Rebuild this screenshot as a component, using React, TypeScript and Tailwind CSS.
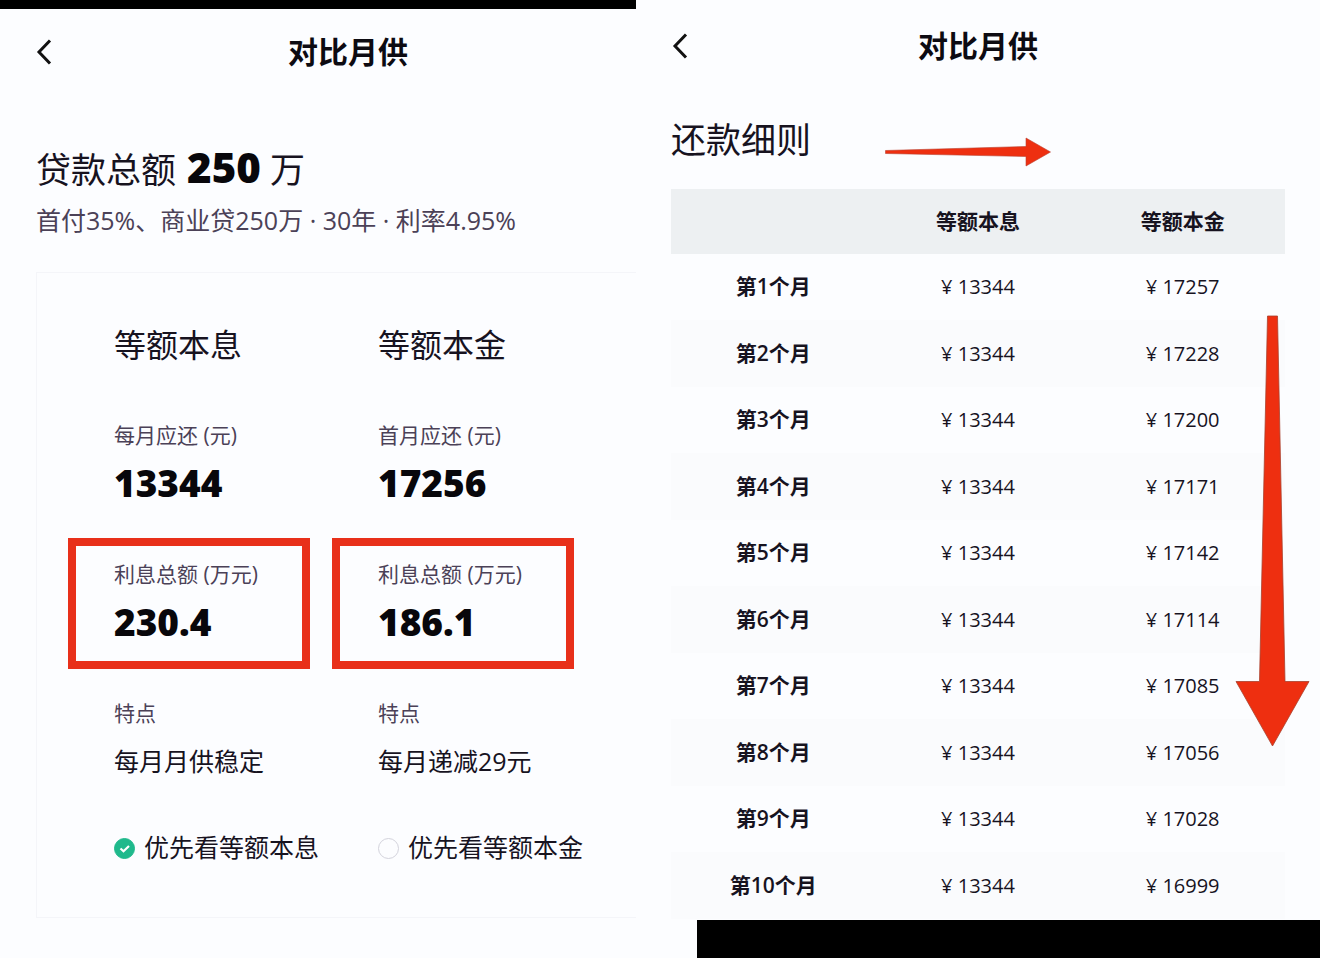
import { useState } from "react";

type Plan = {
  id: string;
  name: string;
  firstLabel: string;
  first: string;
  interest: string;
  feature: string;
};

const PLANS: Plan[] = [
  { id: "interest", name: "等额本息", firstLabel: "每月应还 (元)", first: "13344", interest: "230.4", feature: "每月月供稳定" },
  { id: "principal", name: "等额本金", firstLabel: "首月应还 (元)", first: "17256", interest: "186.1", feature: "每月递减29元" },
];

const MONTHLY = 13344;
const DECREASING = [17257, 17228, 17200, 17171, 17142, 17114, 17085, 17056, 17028, 16999];

function Header({ className }: { className: string }) {
  return (
    <header className={`flex items-center ${className}`}>
      <button type="button" aria-label="返回" className="w-6">
        <svg width="16" height="28" viewBox="0 0 16 28" fill="none" stroke="#111" strokeWidth="3">
          <path d="M14 2.5 L3 14 L14 25.5" />
        </svg>
      </button>
      <h1 className="flex-1 text-center text-[30px] leading-10 font-bold text-[#0d0b12]">对比月供</h1>
    </header>
  );
}

function Figure({ label, children }: { label: string; children: React.ReactNode }) {
  return (
    <div className="relative">
      <p className="text-[21px] leading-8 text-[#4b4157]">{label}</p>
      {children}
    </div>
  );
}

function PlanColumn({ plan, checked, onSelect }: { plan: Plan; checked: boolean; onSelect: () => void }) {
  return (
    <div>
      <h3 className="mb-[50px] text-[32px] leading-[48px] text-[#17131f]">{plan.name}</h3>
      <div className="flex flex-col gap-[43px]">
        <Figure label={plan.firstLabel}>
          <p className="text-[37px] leading-[64px] font-extrabold text-[#08070b]">{plan.first}</p>
        </Figure>
        <Figure label="利息总额 (万元)">
          <p className="text-[37px] leading-[64px] font-extrabold text-[#08070b]">{plan.interest}</p>
          {/* red marker around the total interest */}
          <span className="absolute -top-5 -left-[46px] h-[131px] w-[242px] border-8 border-[#e8301a]" />
        </Figure>
        <Figure label="特点">
          <p className="text-[25px] leading-[64px] text-[#17131f]">{plan.feature}</p>
        </Figure>
        <label className="flex h-6 items-center gap-[9px] text-[25px] whitespace-nowrap text-[#17131f]">
          <span className="relative flex">
            <input
              type="radio"
              name="plan"
              checked={checked}
              onChange={onSelect}
              className="size-[21px] appearance-none rounded-full border border-[#d3d3dc] checked:border-[#1fb98c] checked:bg-[#1fb98c]"
            />
            {checked && (
              <svg className="pointer-events-none absolute inset-0" width="21" height="21" viewBox="0 0 21 21" fill="none" stroke="#fff" strokeWidth="2.2">
                <path d="M6.5 10.5 L9.5 13.2 L15 8" />
              </svg>
            )}
          </span>
          优先看{plan.name}
        </label>
      </div>
    </div>
  );
}

function Summary() {
  const [selected, setSelected] = useState("interest");

  return (
    <section className="flex flex-col">
      <div className="h-[9px] bg-black" />
      <Header className="h-[86px] pl-9" />
      <div className="pt-[46px] pl-9">
        <h2 className="text-[35px] leading-[52px] text-[#17131f]">
          贷款总额 <b className="ml-[2px] text-[42px] leading-[52px] font-extrabold text-[#08070b]">250</b> 万
        </h2>
        <p className="mt-1 text-[25px] leading-10 whitespace-nowrap text-[#4b4157]">
          首付35%、商业贷250万 · 30年 · 利率4.95%
        </p>
        <div className="mt-8 grid grid-cols-2 gap-x-[6px] border-y border-l border-[#f4f5f9] pt-12 pb-[57px] pl-[77px]">
          {PLANS.map((plan) => (
            <PlanColumn
              key={plan.id}
              plan={plan}
              checked={selected === plan.id}
              onSelect={() => setSelected(plan.id)}
            />
          ))}
        </div>
      </div>
    </section>
  );
}

function Schedule() {
  return (
    <section className="relative flex flex-col">
      <Header className="h-[92px] pr-[60px] pl-9" />
      <div className="px-[35px] pt-6">
        <div className="flex h-12 items-center gap-[74px]">
          <h2 className="text-[35px] leading-[48px] text-[#17131f]">还款细则</h2>
          <svg className="mt-6" width="166" height="30" viewBox="0 0 166 30" fill="#ee2f10" stroke="#b8402f" strokeWidth="0.6">
            <path d="M0.5 13.5 L141 9.5 V1 L165.5 15 L141 29 V19.5 L0.5 16.5 Z" />
          </svg>
        </div>
        <table className="mt-[25px] w-full table-fixed text-center">
          <thead>
            <tr className="h-[65px] bg-[#edf0f2] text-[21px] text-[#17131f]">
              <th aria-label="期数" />
              <th>等额本息</th>
              <th>等额本金</th>
            </tr>
          </thead>
          <tbody>
            {DECREASING.map((amount, i) => (
              <tr key={amount} className="text-xl text-[#17131f] odd:h-[66px] even:h-[67px] even:bg-[#fafbfd]">
                <th className="text-[21px] font-semibold">第{i + 1}个月</th>
                <td>¥ {MONTHLY}</td>
                <td>¥ {amount}</td>
              </tr>
            ))}
          </tbody>
        </table>
      </div>
      <div className="mt-auto ml-[61px] h-[38px] bg-black" />
      <svg
        className="absolute top-[315px] right-[10px]"
        width="75"
        height="432"
        viewBox="0 0 75 432"
        fill="#ee2f10"
        stroke="#a8402c"
        strokeWidth="0.8"
      >
        <path d="M32.5 1 H42.5 L50 366.5 H74 L37.5 431 L1 366.5 H24.5 Z" />
      </svg>
    </section>
  );
}

export default function App() {
  return (
    <main className="grid min-h-screen grid-cols-[53fr_57fr] bg-[#fcfdff] font-['Open_Sans','Noto_Sans_CJK_SC',sans-serif]">
      <Summary />
      <Schedule />
    </main>
  );
}
